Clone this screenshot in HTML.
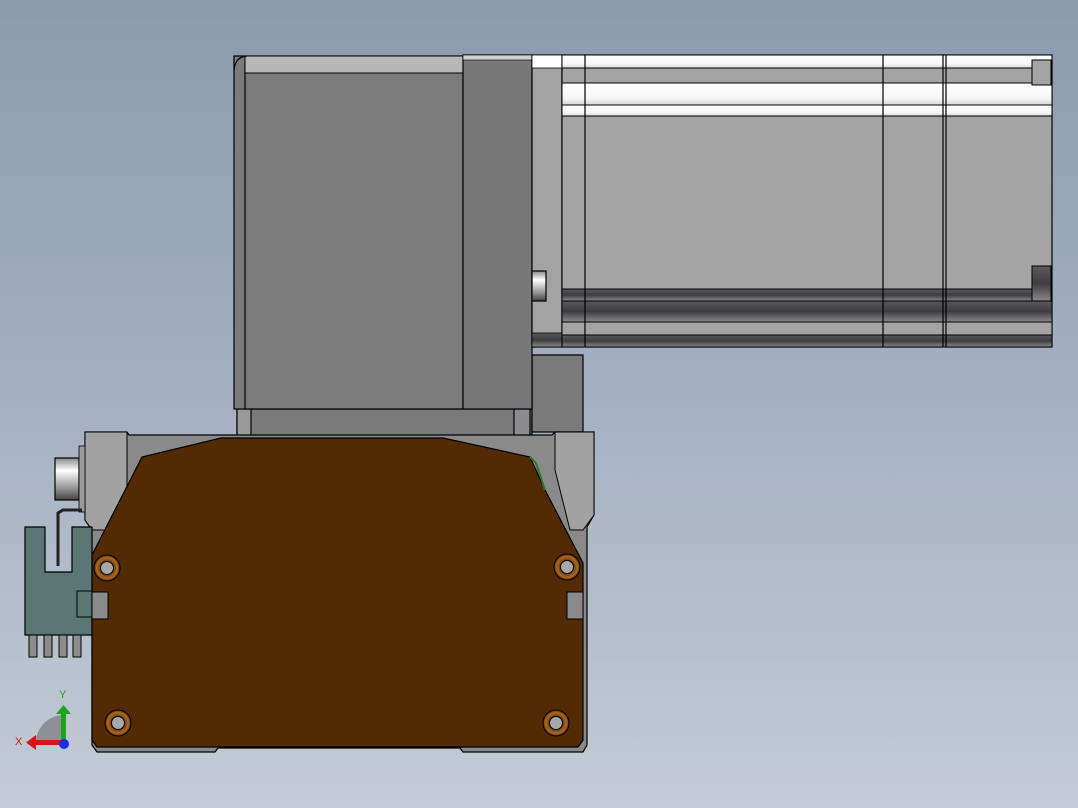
<!DOCTYPE html>
<html><head><style>
html,body{margin:0;padding:0;width:1078px;height:808px;overflow:hidden}
body{background:linear-gradient(180deg,#8a9bb0 0%,#a5b1c2 50%,#c4cbd6 100%)}
svg{position:absolute;left:0;top:0}
text{font-family:"Liberation Sans",sans-serif}
</style></head><body>
<svg width="1078" height="808" viewBox="0 0 1078 808">
<defs>
<linearGradient id="dk" x1="0" y1="0" x2="0" y2="1"><stop offset="0" stop-color="#5a5a5c"/><stop offset=".5" stop-color="#3e3e42"/><stop offset="1" stop-color="#8a8a8a"/></linearGradient>
<linearGradient id="wt" x1="0" y1="0" x2="0" y2="1"><stop offset="0" stop-color="#fff"/><stop offset=".7" stop-color="#f6f6f6"/><stop offset="1" stop-color="#d8d8d8"/></linearGradient>
<linearGradient id="cyl" x1="0" y1="0" x2="0" y2="1"><stop offset="0" stop-color="#888"/><stop offset=".3" stop-color="#fff"/><stop offset=".7" stop-color="#999"/><stop offset="1" stop-color="#444"/></linearGradient>
<radialGradient id="hole"><stop offset=".45" stop-color="#5a3008"/><stop offset=".8" stop-color="#b06a22"/><stop offset="1" stop-color="#4a2804"/></radialGradient>
</defs>
<g stroke="#000" stroke-width="1.2">
<!-- neck -->
<rect x="237" y="409" width="295" height="27" fill="#7a7a7a"/>
<rect x="237" y="409" width="14" height="27" fill="#9a9a9a"/>
<rect x="514" y="409" width="16" height="27" fill="#8c8c8e"/>
<!-- step block -->
<path d="M532 355 H583 V432 H532 Z" fill="#7a7a7a"/>
<!-- left gear box -->
<rect x="234" y="56" width="229" height="353" fill="#7b7b7b"/>
<line x1="245" y1="62" x2="245" y2="409"/>
<rect x="245" y="56" width="218" height="17" fill="#b8b8b8" stroke-width="1"/>
<path d="M234 70 Q235 57 247 56" fill="none"/>
<rect x="463" y="55" width="69" height="354" fill="#787878"/>
<rect x="463" y="55" width="69" height="5" fill="#cfcfcf" stroke-width="0.6"/>
<!-- motor flange -->
<rect x="532" y="55" width="30" height="292" fill="#a3a3a3"/>
<rect x="532" y="55" width="30" height="13" fill="#fff" stroke-width="0.8"/>
<rect x="532" y="333" width="30" height="14" fill="url(#dk)" stroke-width="0.8"/>
<rect x="532" y="271" width="14" height="30" fill="url(#cyl)"/>
<!-- motor body -->
<rect x="562" y="55" width="490" height="292" fill="#a4a4a4"/>
<rect x="562" y="55" width="490" height="13" fill="url(#wt)" stroke-width="1"/>
<rect x="562" y="83" width="490" height="22" fill="url(#wt)" stroke-width="1"/>
<rect x="562" y="105" width="490" height="11" fill="url(#wt)" stroke-width="1"/>
<rect x="562" y="289" width="490" height="12" fill="url(#dk)" stroke-width="1"/>
<rect x="562" y="301" width="490" height="21" fill="url(#dk)" stroke-width="1"/>
<rect x="562" y="322" width="490" height="13" fill="#a4a4a4" stroke-width="1"/>
<rect x="562" y="335" width="490" height="12" fill="url(#dk)" stroke-width="1"/>
<line x1="585" y1="55" x2="585" y2="347"/>
<line x1="883" y1="55" x2="883" y2="347"/>
<line x1="943" y1="55" x2="943" y2="347"/>
<line x1="946" y1="55" x2="946" y2="347"/>
<rect x="1032" y="60" width="19" height="25" fill="#a4a4a4" stroke-width="1"/>
<rect x="1032" y="266" width="19" height="35" fill="url(#dk)" stroke-width="1"/>
<!-- grey base plate -->
<path d="M85 432 H127 L129 435 H552 L555 432 H594 V515 L587 527 V745 L583 752 H463 L460 748 H218 L215 752 H97 L92 745 V530 L85 520 Z" fill="#8a8a8a"/>
<path d="M85 432 H127 V520 L108 530 L92 530 L85 520 Z" fill="#a2a2a2" stroke-width="1"/>
<path d="M555 432 H594 V515 L583 530 H570 L555 470 Z" fill="#a2a2a2" stroke-width="1"/>
<!-- connector + cylinder -->
<rect x="55" y="458" width="24" height="42" fill="url(#cyl)"/>
<rect x="79" y="446" width="6" height="66" fill="#9a9a9a" stroke-width="0.8"/>
<path d="M25 527 H45 V572 H72 V527 H92 V635 H25 Z" fill="#5b7775"/>
<path d="M58 566 V513 L63 510 H82" fill="none" stroke="#222" stroke-width="3"/>
<rect x="77" y="591" width="15" height="26" fill="#5b7775" stroke-width="1"/>
<g fill="#8c8c8c" stroke-width="1">
<rect x="29" y="635" width="8" height="22"/><rect x="44" y="635" width="8" height="22"/><rect x="59" y="635" width="8" height="22"/><rect x="73" y="635" width="8" height="22"/>
</g>
<!-- brown plate -->
<path d="M221 438 H443 L530 457 L545 490 L583 563 V740 L578 747 H97 L92 740 V555 L142 457 Z" fill="#522a03"/>
<path d="M530 457 L536 463 L545 490" fill="none" stroke="#2c7a2c" stroke-width="2"/>
<!-- notches -->
<rect x="92" y="592" width="16" height="27" fill="#8a8a8a" stroke-width="1"/>
<rect x="567" y="592" width="16" height="27" fill="#8a8a8a" stroke-width="1"/>
<!-- holes -->
<g stroke-width="1">
<circle cx="107" cy="568" r="13" fill="url(#hole)"/><circle cx="107" cy="568" r="6.5" fill="#a8a8a8"/>
<circle cx="567" cy="567" r="13" fill="url(#hole)"/><circle cx="567" cy="567" r="6.5" fill="#a8a8a8"/>
<circle cx="118" cy="723" r="13" fill="url(#hole)"/><circle cx="118" cy="723" r="6.5" fill="#a8a8a8"/>
<circle cx="556" cy="723" r="13" fill="url(#hole)"/><circle cx="556" cy="723" r="6.5" fill="#a8a8a8"/>
</g>
</g>
<!-- triad -->
<path d="M36 740 A28 28 0 0 1 63 715 V740 Z" fill="#8e9096"/>
<rect x="61" y="712" width="5" height="29" fill="#1aa51a"/>
<path d="M56 714 L63.5 705 L71 714 Z" fill="#1aa51a"/>
<rect x="34" y="740" width="30" height="5" fill="#d01818"/>
<path d="M36 735 L26 742.5 L36 750 Z" fill="#d01818"/>
<circle cx="64" cy="744" r="5" fill="#1a2ee0"/>
<text x="59" y="698" font-size="11" fill="#1aa51a">Y</text>
<text x="15" y="745" font-size="11" fill="#d01818">X</text>
</svg>
</body></html>
